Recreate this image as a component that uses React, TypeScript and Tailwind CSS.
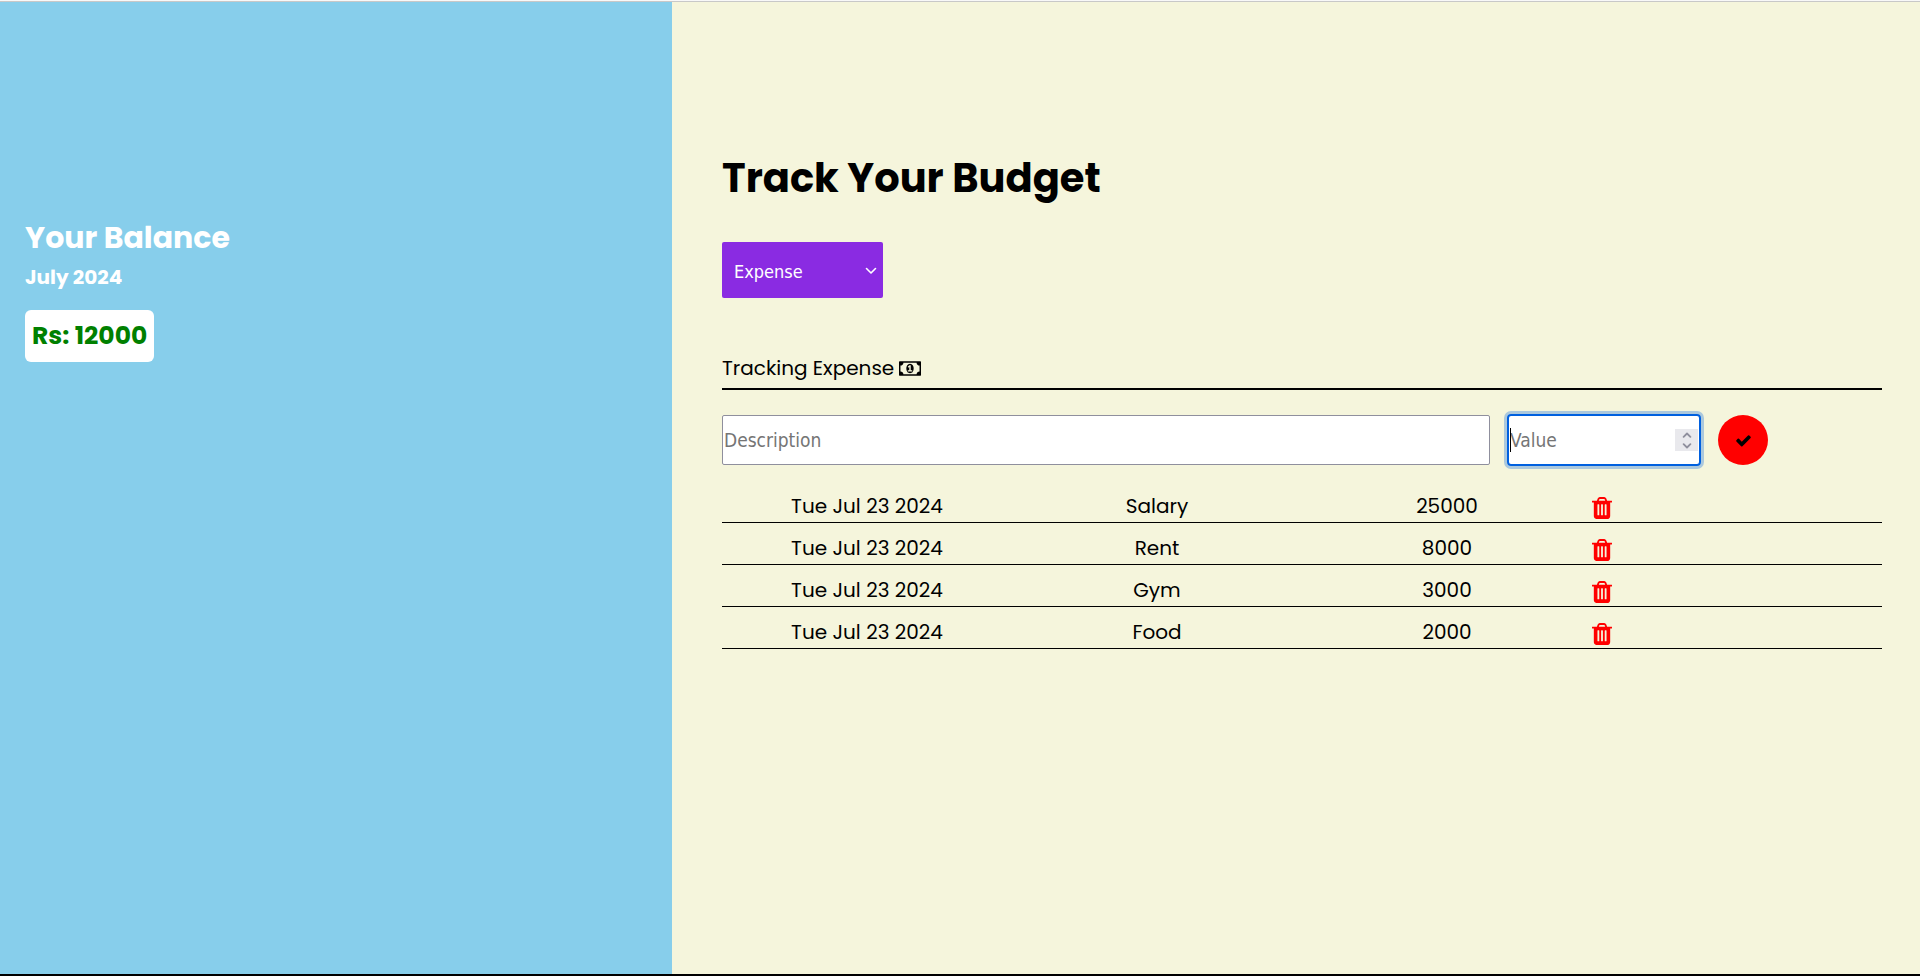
import { useState } from "react";

type Entry = { id: number; date: string; label: string; value: number };

const initialEntries: Entry[] = [
  { id: 1, date: "Tue Jul 23 2024", label: "Salary", value: 25000 },
  { id: 2, date: "Tue Jul 23 2024", label: "Rent", value: 8000 },
  { id: 3, date: "Tue Jul 23 2024", label: "Gym", value: 3000 },
  { id: 4, date: "Tue Jul 23 2024", label: "Food", value: 2000 },
];

function TrashIcon() {
  return (
    <svg viewBox="192 128 1408 1536" className="h-[22px] w-5" fill="currentColor" aria-hidden="true">
      <path d="M704 1376v-704q0-14-9-23t-23-9h-64q-14 0-23 9t-9 23v704q0 14 9 23t23 9h64q14 0 23-9t9-23zm256 0v-704q0-14-9-23t-23-9h-64q-14 0-23 9t-9 23v704q0 14 9 23t23 9h64q14 0 23-9t9-23zm256 0v-704q0-14-9-23t-23-9h-64q-14 0-23 9t-9 23v704q0 14 9 23t23 9h64q14 0 23-9t9-23zm-544-992h448l-48-117q-7-9-17-11h-317q-10 2-17 11zm928 32v64q0 14-9 23t-23 9h-96v948q0 83-47 143.5t-113 60.5h-832q-66 0-113-58.5t-47-141.5v-952h-96q-14 0-23-9t-9-23v-64q0-14 9-23t23-9h309l70-167q15-37 54-63t79-26h320q40 0 79 26t54 63l70 167h309q14 0 23 9t9 23z" />
    </svg>
  );
}

function MoneyIcon() {
  return (
    <svg viewBox="0 256 1920 1280" className="h-[15px] w-[22px]" fill="currentColor" aria-hidden="true">
      <path d="M768 1152h384v-96h-128v-448h-114l-148 137 77 80q42-37 55-57h2v288h-128v96zm512-256q0 70-21 142t-59.5 134-101.5 101-138 39-138-39-101.5-101-59.5-134-21-142 21-142 59.5-134 101.5-101 138-39 138 39 101.5 101 59.5 134 21 142zm512 256v-512q-106 0-181-75t-75-181h-1152q0 106-75 181t-181 75v512q106 0 181 75t75 181h1152q0-106 75-181t181-75zm128-832v1152q0 26-19 45t-45 19h-1792q-26 0-45-19t-19-45v-1152q0-26 19-45t45-19h1792q26 0 45 19t19 45z" />
    </svg>
  );
}

function CheckIcon() {
  return (
    <svg viewBox="0 0 1792 1792" className="size-[17px]" fill="currentColor" aria-hidden="true">
      <path d="M1671 566q0 40-28 68l-724 724-136 136q-28 28-68 28t-68-28l-136-136-362-362q-28-28-28-68t28-68l136-136q28-28 68-28t68 28l294 295 656-657q28-28 68-28t68 28l136 136q28 28 28 68z" />
    </svg>
  );
}

function Chevron({ className }: { className: string }) {
  return (
    <svg viewBox="0 0 12 8" className={className} fill="none" stroke="currentColor" strokeLinecap="round" strokeLinejoin="round" aria-hidden="true">
      <path d="M1.5 1.5 6 6l4.5-4.5" />
    </svg>
  );
}

export default function App() {
  const [entries, setEntries] = useState(initialEntries);
  const [kind, setKind] = useState("Expense");
  const [description, setDescription] = useState("");
  const [value, setValue] = useState("");

  const step = (by: number) => setValue(String(Number(value || 0) + by));

  return (
    <div className="flex min-h-screen flex-col border-b-2 border-black bg-[#f5f5dc] font-[Poppins,Inter,sans-serif] text-black">
      <div className="h-0.5 border-b border-[#c8c8c8] bg-[#f8f8f8]" />
      <div className="flex grow">
        <aside className="w-[35%] bg-[#87ceeb] px-[25px] pt-[213px] text-white">
          <h2 className="text-[30px] leading-[46px] font-bold">Your Balance</h2>
          <p className="text-[20px] leading-8 font-bold">July 2024</p>
          <p className="mt-[17px] w-fit rounded-md bg-white px-[7px] text-[25px] leading-[52px] font-bold text-[#008000]">
            Rs: 12000
          </p>
        </aside>

        <main className="w-[65%] pt-[146px] pr-[38px] pl-[50px]">
          <h1 className="text-[40px] leading-[60px] font-bold">Track Your Budget</h1>

          <div className="relative mt-[34px] w-[161px]">
            <select
              aria-label="Budget type"
              value={kind}
              onChange={(e) => setKind(e.target.value)}
              className="block h-14 w-full appearance-none rounded-xs bg-[#8a2be2] pt-0.5 pl-3 font-['DejaVu_Sans_Condensed','DejaVu_Sans',sans-serif] text-[18px] text-white"
            >
              <option>Expense</option>
              <option>Income</option>
            </select>
            <Chevron className="pointer-events-none absolute top-[25px] right-1.5 h-2 w-3 stroke-[1.6] text-white" />
          </div>

          <div className="mt-[54px] flex h-[38px] items-center gap-[5px] border-b-2 border-black pb-1 text-[20px]">
            <h2>Tracking {kind}</h2>
            <MoneyIcon />
          </div>

          <form
            className="mt-6 flex items-center gap-[17px] pr-[114px] font-['DejaVu_Sans_Condensed','DejaVu_Sans',sans-serif] text-[19px]"
            onSubmit={(e) => e.preventDefault()}
          >
            <input
              type="text"
              aria-label="Description"
              placeholder="Description"
              value={description}
              onChange={(e) => setDescription(e.target.value)}
              className="h-[50px] grow rounded-xs border border-[#8f8f9d] bg-white px-px outline-none placeholder:text-[#757575]"
            />
            <div className="relative w-[194px]">
              <input
                type="number"
                aria-label="Value"
                placeholder="Value"
                value={value}
                onChange={(e) => setValue(e.target.value)}
                className="block h-[52px] w-full appearance-none rounded border-2 border-[#0060df] bg-white px-px outline-3 outline-[#0060df]/30 [-moz-appearance:textfield] placeholder:text-[#757575] [&::-webkit-inner-spin-button]:appearance-none"
              />
              {value === "" && <span className="pointer-events-none absolute top-3.5 left-[3px] h-6 w-px bg-black" />}
              <div className="absolute top-[15px] right-[3px] flex h-[22px] w-[23px] flex-col bg-[#e9e9ed] text-[#8f8f9d]">
                <button type="button" aria-label="Increase value" onClick={() => step(1)} className="flex h-[11px] items-center justify-center">
                  <Chevron className="h-1.5 w-2.5 rotate-180 stroke-[2.4]" />
                </button>
                <button type="button" aria-label="Decrease value" onClick={() => step(-1)} className="flex h-[11px] items-center justify-center">
                  <Chevron className="h-1.5 w-2.5 stroke-[2.4]" />
                </button>
              </div>
            </div>
            <button type="submit" aria-label="Add entry" className="flex size-[50px] shrink-0 items-center justify-center rounded-full bg-[#ff0000]">
              <CheckIcon />
            </button>
          </form>

          <table className="mt-[15px] w-full table-fixed border-separate border-spacing-0 text-center text-[20px]">
            <tbody>
              {entries.map((entry) => (
                <tr key={entry.id} className="h-[42px]">
                  <td className="border-b border-black pt-2 leading-7">{entry.date}</td>
                  <td className="border-b border-black pt-2 leading-7">{entry.label}</td>
                  <td className="border-b border-black pt-2 leading-7">{entry.value}</td>
                  <td className="border-b border-black pt-3 text-left">
                    <button
                      type="button"
                      aria-label={"Delete " + entry.label}
                      onClick={() => setEntries(entries.filter((e) => e.id !== entry.id))}
                      className="block text-[#ff0000]"
                    >
                      <TrashIcon />
                    </button>
                  </td>
                </tr>
              ))}
            </tbody>
          </table>
        </main>
      </div>
    </div>
  );
}
